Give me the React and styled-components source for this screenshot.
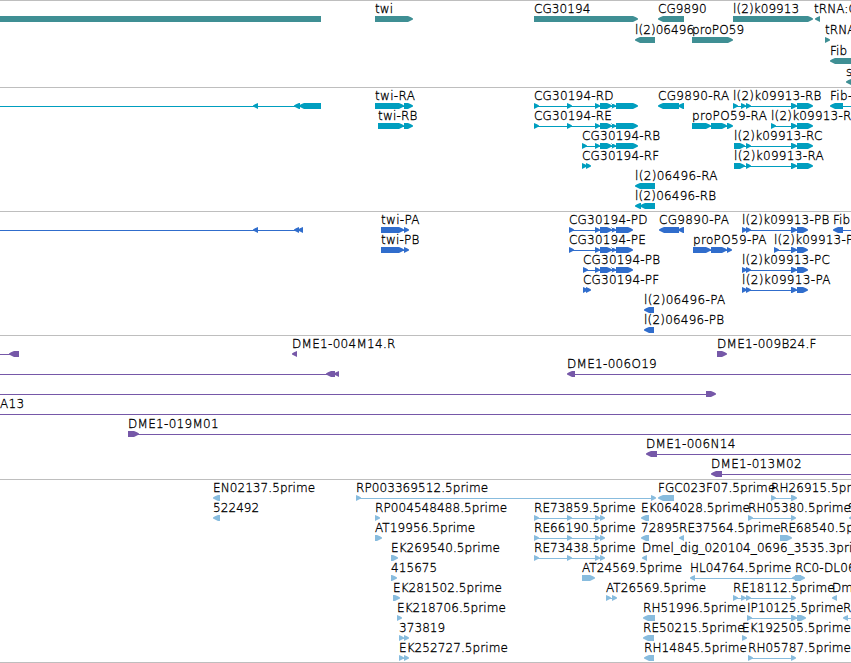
import React from 'react';
import styled, { createGlobalStyle } from 'styled-components';

const R = 'right';
const L = 'left';
const EDGE = 851;

// feature: [label, direction, exons, options]
// the label sits over the first exon unless options.x says otherwise
const feature = (label, dir, exons, options = {}) => ({ label, dir, exons, ...options });

const cgTail = [[595, 600], [600, 612], [612, 616]];
const estRE = [[534, 539], [567, 572], [595, 600], [600, 605]];

const genes = [
  [
    feature('', null, [[0, 321]]),
    feature('twi', R, [[375, 413]]),
    feature('CG30194', R, [[534, 638]]),
    feature('CG9890', L, [[658, 684]]),
    feature('l(2)k09913', R, [[733, 813]]),
    feature('tRNA:CR', L, [[815, 820]], { x: 814 }),
  ],
  [
    feature('l(2)06496', L, [[635, 655]]),
    feature('proPO59', R, [[692, 733]]),
    feature('tRNA', R, [[825, 830]]),
  ],
  [feature('Fib', L, [[830, 860]])],
  [feature('s', L, [[846, 860]])],
];

const transcripts = [
  [
    feature('', L, [[253, 258], [294, 300], [299, 321]], { from: 0 }),
    feature('twi-RA', R, [[375, 404], [404, 413]]),
    feature('CG30194-RD', R, [[534, 539], [567, 572], ...cgTail, [616, 638]]),
    feature('CG9890-RA', L, [[658, 679], [678, 684]]),
    feature('l(2)k09913-RB', R, [[733, 738], [741, 746], [746, 751], [791, 797], [797, 813]]),
    feature('Fib-RA', L, [[830, 843]], { to: EDGE }),
  ],
  [
    feature('twi-RB', R, [[378, 404], [404, 413]]),
    feature('CG30194-RE', R, [[534, 539], [567, 572], ...cgTail, [616, 638]]),
    feature('proPO59-RA', R, [[692, 711], [711, 727], [727, 733]]),
    feature('l(2)k09913-RD', R, [[771, 776], [791, 797], [797, 813]]),
  ],
  [
    feature('CG30194-RB', R, [[582, 587], ...cgTail, [616, 638]]),
    feature('l(2)k09913-RC', R, [[734, 745], [746, 751], [791, 797], [797, 813]]),
  ],
  [
    feature('CG30194-RF', R, [[582, 587], [586, 591]]),
    feature('l(2)k09913-RA', R, [[734, 745], [746, 751], [791, 797], [797, 813]]),
  ],
  [feature('l(2)06496-RA', L, [[635, 655]])],
  [feature('l(2)06496-RB', L, [[635, 641], [640, 655]])],
];

const proteins = [
  [
    feature('', L, [[253, 258], [294, 299], [298, 303]], { from: 0 }),
    feature('twi-PA', R, [[381, 404], [404, 409]]),
    feature('CG30194-PD', R, [[569, 574], ...cgTail, [616, 633]]),
    feature('CG9890-PA', L, [[659, 679], [678, 684]]),
    feature('l(2)k09913-PB', R, [[742, 747], [746, 751], [791, 797], [797, 808]]),
    feature('Fib', L, [[833, 843]], { to: EDGE }),
  ],
  [
    feature('twi-PB', R, [[381, 404], [404, 409]]),
    feature('CG30194-PE', R, [[569, 574], ...cgTail, [616, 633]]),
    feature('proPO59-PA', R, [[693, 711], [711, 727], [727, 732]]),
    feature('l(2)k09913-PD', R, [[774, 779], [791, 797], [797, 808]]),
  ],
  [
    feature('CG30194-PB', R, [[583, 588], ...cgTail, [616, 633]]),
    feature('l(2)k09913-PC', R, [[742, 747], [746, 751], [791, 797], [797, 808]]),
  ],
  [
    feature('CG30194-PF', R, [[583, 588], [586, 591]]),
    feature('l(2)k09913-PA', R, [[742, 747], [746, 751], [791, 797], [797, 808]]),
  ],
  [feature('l(2)06496-PA', L, [[644, 654]])],
  [feature('l(2)06496-PB', L, [[644, 654]])],
];

const clones = [
  [
    feature('', L, [[9, 19]], { from: 0 }),
    feature('DME1-004M14.R', L, [[292, 297]]),
    feature('DME1-009B24.F', R, [[717, 727]]),
  ],
  [
    feature('', L, [[326, 335], [334, 339]], { from: 0 }),
    feature('DME1-006O19', L, [[567, 575]], { to: EDGE }),
  ],
  [feature('', R, [[706, 716]], { from: 0 })],
  [feature('A13', R, [], { x: 0, from: 0, to: EDGE })],
  [feature('DME1-019M01', R, [[128, 139]], { to: EDGE })],
  [feature('DME1-006N14', L, [[646, 657]], { to: EDGE })],
  [feature('DME1-013M02', L, [[711, 722]], { to: EDGE })],
];

const ests = [
  [
    feature('EN02137.5prime', L, [[213, 220]]),
    feature('RP003369512.5prime', R, [[356, 361], [651, 656]]),
    feature('FGC023F07.5prime', L, [[658, 674]]),
    feature('RH26915.5prime', R, [[771, 776], [791, 797]]),
  ],
  [
    feature('522492', L, [[213, 220]]),
    feature('RP004548488.5prime', R, [[375, 380]]),
    feature('RE73859.5prime', R, estRE),
    feature('EK064028.5prime', L, [[641, 649]]),
    feature('RH05380.5prime', R, [[748, 753], [791, 796]]),
    feature('S', L, [[849, 856]], { x: 848 }),
  ],
  [
    feature('AT19956.5prime', R, [[375, 382]]),
    feature('RE66190.5prime', R, estRE),
    feature('72895', L, [[641, 649]]),
    feature('RE37564.5prime', L, [[679, 684]]),
    feature('RE68540.5prime', R, [[780, 792]]),
  ],
  [
    feature('EK269540.5prime', R, [[391, 398]]),
    feature('RE73438.5prime', R, estRE),
    feature('Dmel_dig_020104_0696_3535.3prime', L, [[642, 647]]),
  ],
  [
    feature('415675', R, [[391, 397]]),
    feature('AT24569.5prime', R, [[582, 595]]),
    feature('HL04764.5prime', L, [[690, 695], [792, 801]]),
    feature('RC0-DL06', R, [[795, 805]]),
  ],
  [
    feature('EK281502.5prime', R, [[393, 400]]),
    feature('AT26569.5prime', R, [[606, 611], [612, 617]]),
    feature('RE18112.5prime', R, [[733, 738], [741, 746], [746, 751], [791, 796]]),
    feature('Dm', L, [[832, 837]]),
  ],
  [
    feature('EK218706.5prime', R, [[397, 402]]),
    feature('RH51996.5prime', L, [[643, 655]]),
    feature('IP10125.5prime', R, [[747, 752], [791, 797], [797, 806]]),
    feature('RE', L, [[843, 848]], { to: EDGE }),
  ],
  [
    feature('373819', R, [[399, 404], [404, 409]]),
    feature('RE50215.5prime', L, [[643, 654]]),
    feature('EK192505.5prime', R, [[742, 747]]),
  ],
  [
    feature('EK252727.5prime', R, [[399, 404], [404, 409]]),
    feature('RH14845.5prime', L, [[644, 654]]),
    feature('RH05787.5prime', R, [[748, 753], [791, 796]]),
  ],
];

const tracks = [
  { id: 'genes', color: '#3f8f94', lanes: genes, laneHeight: 21, height: 87 },
  { id: 'transcripts', color: '#009ebf', lanes: transcripts, laneHeight: 20, height: 124 },
  { id: 'proteins', color: '#306dcc', lanes: proteins, laneHeight: 20, height: 124 },
  { id: 'clones', color: '#7658a8', lanes: clones, laneHeight: 20, height: 144, wide: true },
  { id: 'ests', color: '#88bcde', lanes: ests, laneHeight: 20, height: 183 },
];

const exonPath = (start, end, dir) => {
  if (dir === R) {
    return `M${start} 0H${end - 5}L${end - 2} 1.2L${end} 2.6V3.4L${end - 2} 4.4L${end - 5} 6H${start}Z`;
  }
  if (dir === L) {
    return `M${end} 0H${start + 5}L${start + 2} 1.2L${start} 2.6V3.4L${start + 2} 4.4L${start + 5} 6H${end}Z`;
  }
  return `M${start} 0H${end}V6H${start}Z`;
};

const tracking = (label, wide) => {
  if (wide) return 0.3;
  if (/-[RP]A$/.test(label)) return 0.33;
  return label.includes('-') ? 0.2 : 0.08;
};

const GeneModel = ({ dir, exons, from, to }) => {
  const first = from !== undefined ? from : exons[0][0] + 2;
  const last = to !== undefined ? to : exons[exons.length - 1][1] - 2;
  const hasIntrons = exons.length > 1 || from !== undefined || to !== undefined;
  return (
    <g>
      {hasIntrons && <rect x={first} y="3" width={last - first} height="1" />}
      {exons.map(([start, end]) => (
        <path key={start} d={exonPath(start, end, dir)} />
      ))}
    </g>
  );
};

const App = () => (
  <>
    <GlobalStyle />
    <Browser>
      {tracks.map((track) => (
        <Track key={track.id} $height={track.height}>
          {track.lanes.map((lane, i) => (
            <Lane key={i} $height={track.laneHeight}>
              <Glyphs $color={track.color} width={EDGE} height="6">
                {lane.map((f, n) => <GeneModel key={n} {...f} />)}
              </Glyphs>
              {lane.filter((f) => f.label).map((f) => (
                <Label
                  key={f.label}
                  $x={f.x !== undefined ? f.x : f.exons[0][0]}
                  $tracking={tracking(f.label, track.wide)}
                >
                  {f.label}
                </Label>
              ))}
            </Lane>
          ))}
        </Track>
      ))}
    </Browser>
  </>
);

const GlobalStyle = createGlobalStyle`
  body {
    margin: 0;
    background: #fff;
  }
`;

const Browser = styled.main`
  width: 851px;
  height: 663px;
  box-sizing: border-box;
  overflow: hidden;
  border-bottom: 1px solid #bebebe;
  font-family: "DejaVu Sans Light", "DejaVu Sans", sans-serif;
  font-size: 12px;
  font-weight: 200;
  line-height: 14px;
  color: #000;
  -webkit-text-stroke: 0.3px #000;
`;

const Track = styled.section`
  box-sizing: border-box;
  height: ${({ $height }) => $height}px;
  border-top: 1px solid #bebebe;
`;

const Lane = styled.div`
  position: relative;
  box-sizing: border-box;
  height: ${({ $height }) => $height}px;
  padding-top: 15px;
`;

const Glyphs = styled.svg`
  display: block;
  fill: ${({ $color }) => $color};
`;

// labels overlap their neighbours wherever features crowd together
const Label = styled.span`
  position: absolute;
  top: 1px;
  left: ${({ $x }) => $x}px;
  letter-spacing: ${({ $tracking }) => $tracking}px;
  white-space: nowrap;
`;

export default App;
